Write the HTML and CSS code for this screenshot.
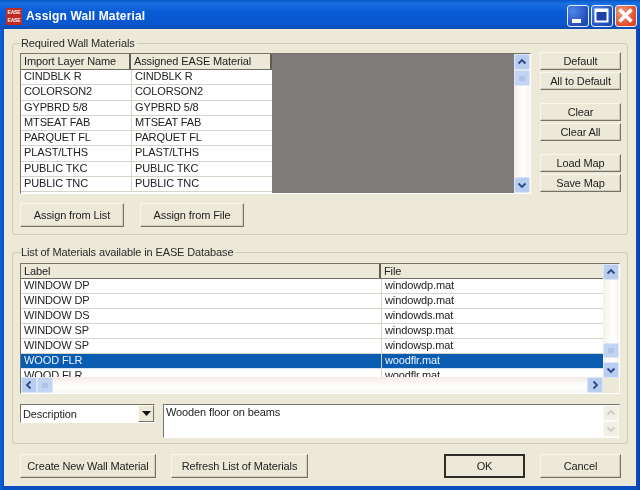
FILE: index.html
```html
<!DOCTYPE html>
<html lang="en">
<head>
<meta charset="utf-8">
<title>Assign Wall Material</title>
<link rel="stylesheet" href="styles.css">
</head>
<body>
<div class="window">
  <header class="titlebar">
    <span class="app-icon"><span>EASE</span><span>EASE</span></span>
    <h1 class="title">Assign Wall Material</h1>
    <div class="caption-buttons">
      <span class="cap cap-min"><svg width="22" height="22" viewBox="0 0 22 22"><rect x="5" y="14" width="9" height="4" fill="#fff"/></svg></span>
      <span class="cap cap-max"><svg width="22" height="22" viewBox="0 0 22 22"><rect x="4.500" y="4.500" width="12" height="12" fill="#1c3fa8" stroke="#fff" stroke-width="2"/><rect x="4" y="4" width="13" height="3" fill="#fff"/></svg></span>
      <span class="cap cap-close"><svg width="22" height="22" viewBox="0 0 22 22"><path d="M4.500 4.500l12 12M16.500 4.500l-12 12" stroke="#fff" stroke-width="3.600" fill="none"/></svg></span>
    </div>
  </header>
  <main class="client">
    <fieldset class="group group-top">
      <legend>Required Wall Materials</legend>
      <div class="top-row">
        <div class="grid-box grid-top">
          <div class="grid-main">
            <div class="table-wrap">
              <div class="thead cols-a"><span class="th">Import Layer Name</span><span class="th">Assigned EASE Material</span></div>
              <div class="row cols-a"><span>CINDBLK R</span><span>CINDBLK R</span></div>
              <div class="row cols-a"><span>COLORSON2</span><span>COLORSON2</span></div>
              <div class="row cols-a"><span>GYPBRD 5/8</span><span>GYPBRD 5/8</span></div>
              <div class="row cols-a"><span>MTSEAT FAB</span><span>MTSEAT FAB</span></div>
              <div class="row cols-a"><span>PARQUET FL</span><span>PARQUET FL</span></div>
              <div class="row cols-a"><span>PLAST/LTHS</span><span>PLAST/LTHS</span></div>
              <div class="row cols-a"><span>PUBLIC TKC</span><span>PUBLIC TKC</span></div>
              <div class="row cols-a"><span>PUBLIC TNC</span><span>PUBLIC TNC</span></div>
            </div>
            <div class="gray-fill"></div>
          </div>
          <div class="vscroll">
            <span class="sbtn"><svg width="16" height="16" viewBox="0 0 16 16"><path d="M4.500 9.500L8 6l3.500 3.500" class="chev"/></svg></span>
            <span class="thumb thumb-top"></span>
            <span class="track"></span>
            <span class="sbtn"><svg width="16" height="16" viewBox="0 0 16 16"><path d="M4.500 6.500L8 10l3.500-3.500" class="chev"/></svg></span>
          </div>
        </div>
        <div class="side-buttons">
          <button class="btn side">Default</button>
          <button class="btn side">All to Default</button>
          <button class="btn side gap-before">Clear</button>
          <button class="btn side">Clear All</button>
          <button class="btn side gap-before">Load Map</button>
          <button class="btn side">Save Map</button>
        </div>
      </div>
      <div class="assign-row">
        <button class="btn assign">Assign from List</button>
        <button class="btn assign">Assign from File</button>
      </div>
    </fieldset>

    <fieldset class="group group-bottom">
      <legend>List of Materials available in EASE Database</legend>
      <div class="grid-box grid-list">
        <div class="list-left">
          <div class="list-view">
            <div class="thead cols-b"><span class="th">Label</span><span class="th th-plain">File</span></div>
            <div class="row cols-b"><span>WINDOW DP</span><span>windowdp.mat</span></div>
            <div class="row cols-b"><span>WINDOW DP</span><span>windowdp.mat</span></div>
            <div class="row cols-b"><span>WINDOW DS</span><span>windowds.mat</span></div>
            <div class="row cols-b"><span>WINDOW SP</span><span>windowsp.mat</span></div>
            <div class="row cols-b"><span>WINDOW SP</span><span>windowsp.mat</span></div>
            <div class="row cols-b selected"><span>WOOD FLR</span><span>woodflr.mat</span></div>
            <div class="row cols-b"><span>WOOD FLR</span><span>woodflr.mat</span></div>
          </div>
          <div class="hscroll">
            <span class="sbtn"><svg width="16" height="16" viewBox="0 0 16 16"><path d="M9.500 4.500L6 8l3.500 3.500" class="chev"/></svg></span>
            <span class="thumb thumb-h"></span>
            <span class="track"></span>
            <span class="sbtn"><svg width="16" height="16" viewBox="0 0 16 16"><path d="M6.500 4.500L10 8l-3.500 3.500" class="chev"/></svg></span>
          </div>
        </div>
        <div class="scroll-col">
          <div class="vscroll vscroll-list">
            <span class="sbtn"><svg width="16" height="16" viewBox="0 0 16 16"><path d="M4.500 9.500L8 6l3.500 3.500" class="chev"/></svg></span>
            <span class="track"></span>
            <span class="thumb thumb-low"></span>
            <span class="sbtn"><svg width="16" height="16" viewBox="0 0 16 16"><path d="M4.500 6.500L8 10l3.500-3.500" class="chev"/></svg></span>
          </div>
          <span class="corner"></span>
        </div>
      </div>
      <div class="desc-row">
        <div class="combo">
          <span class="combo-text">Description</span>
          <span class="combo-arrow"><svg width="9" height="5" viewBox="0 0 9 5"><path d="M0 0h9L4.500 5z" fill="#111"/></svg></span>
        </div>
        <div class="memo">
          <span class="memo-text">Wooden floor on beams</span>
          <div class="memo-scroll">
            <span class="dis-btn"><svg width="16" height="16" viewBox="0 0 16 16"><path d="M4.500 9.500L8 6l3.500 3.500" class="chev-dis"/></svg></span>
            <span class="dis-btn"><svg width="16" height="16" viewBox="0 0 16 16"><path d="M4.500 6.500L8 10l3.500-3.500" class="chev-dis"/></svg></span>
          </div>
        </div>
      </div>
    </fieldset>

    <footer class="footer">
      <button class="btn wide">Create New Wall Material</button>
      <button class="btn wide">Refresh List of Materials</button>
      <span class="spacer"></span>
      <button class="btn action default">OK</button>
      <button class="btn action">Cancel</button>
    </footer>
  </main>
</div>
</body>
</html>
```
FILE: styles.css
```css
* { box-sizing: border-box; }
html, body { margin: 0; padding: 0; }
body { width: 640px; height: 490px; overflow: hidden; background: #0a47b8; font-family: "Liberation Sans", Arial, sans-serif; font-size: 11px; letter-spacing: -0.12px; color: #222; }

.window { width: 640px; height: 490px; display: flex; flex-direction: column; padding: 0 4px 4px 4px; background: linear-gradient(90deg, #0f5fd8 0, #0a4fc0 4px, #0a4fc0 636px, #0a3fa8 100%); filter: blur(0.35px); }

.titlebar { height: 29px; margin: 0 -4px; padding: 3px 3px 0 6px; display: flex; align-items: center; gap: 4px; background: linear-gradient(180deg, #0a55c8 0%, #1a6fe0 12%, #0a5bd6 40%, #0a57cf 80%, #0a4cb4 100%); flex: none; }
.app-icon { width: 16px; height: 17px; background: #c02a20; color: #fff; font-size: 5px; line-height: 8px; display: flex; flex-direction: column; align-items: center; justify-content: center; overflow: hidden; letter-spacing: -0.2px; font-weight: 700; flex: none; }
.title { margin: 0; font-size: 12px; font-weight: 700; color: #fff; letter-spacing: 0.15px; flex: 1; font-family: "Liberation Sans", Arial, sans-serif; }
.caption-buttons { display: flex; gap: 2px; }
.cap { width: 22px; height: 22px; border: 1px solid #e8eefb; border-radius: 3px; display: block; overflow: hidden; background: radial-gradient(circle at 25% 25%, #4f86e8, #1e48b4 80%); }
.cap svg { display: block; margin: -1px; }
.cap-close { background: radial-gradient(circle at 30% 30%, #f09a78, #dd4a22 75%); }

.client { flex: 1; background: #ece9d8; padding: 8px 8px 0 8px; display: flex; flex-direction: column; min-height: 0; }

.group { margin: 0; padding: 3px 6px 0 7px; border: 1px solid #cfccbb; border-radius: 3px; min-width: 0; }
.group legend { padding: 0 2px 0 0; margin-left: 1px; line-height: 13px; color: #2a2a2a; }
.group-top { height: 198px; }
.group-bottom { height: 198px; margin-top: 11px; padding-top: 4px; }

.top-row { display: flex; gap: 9px; }
.grid-box { border: 1px solid; border-color: #77746a #fff #fff #77746a; display: flex; background: #fff; }
.grid-top { width: 511px; height: 141px; }
.grid-main { flex: 1; display: flex; min-width: 0; }
.table-wrap { width: 251px; background: #fff; overflow: hidden; flex: none; }
.gray-fill { flex: 1; background: #7f7b7b; }

.thead { height: 16px; background: #ece9d8; border-bottom: 1px solid #6f6c62; }
.th { padding-left: 3px; line-height: 15px; border-right: 2px solid #5f5c54; color: #222; display: block; white-space: nowrap; }
.th-plain { border-right: 0; }
.row { height: 15.3px; border-bottom: 1px solid #d6d3c8; line-height: 13px; color: #222; }
.row span { padding-left: 3px; display: block; white-space: nowrap; }
.row span + span { border-left: 1px solid #d6d3c8; }
.cols-a { display: grid; grid-template-columns: 110px 141px; }
.cols-b { display: grid; grid-template-columns: 360px 223px; }
.selected { background: #0a5cb0; color: #e8f2ff; border-bottom-color: #d6e2ee; }

.vscroll { width: 16px; flex: none; display: flex; flex-direction: column; background: linear-gradient(90deg, #f3f1e6, #fff 60%, #f6f5ee); }
.hscroll { height: 16px; flex: none; display: flex; background: linear-gradient(180deg, #f5ece6, #fff 60%, #f6f5ee); }
.sbtn { width: 16px; height: 16px; flex: none; background: #b9cdf0; border: 1px solid #dce6f7; border-radius: 2px; display: block; }
.sbtn svg { display: block; margin: -1px; }
.chev { fill: none; stroke: #2b4a86; stroke-width: 1.8; }
.thumb { flex: none; width: 16px; height: 16px; border: 1px solid #dde6f7; border-radius: 2px; display: block; background: linear-gradient(#aec3ea, #aec3ea) center / 6px 5px no-repeat, #c3d3f2; }
.thumb-low { height: 15px; margin-bottom: 4px; }
.track { flex: 1; display: block; }
.scroll-col { width: 16px; flex: none; display: flex; flex-direction: column; background: #ece9d8; }
.vscroll-list { flex: 1; }
.corner { height: 15px; flex: none; display: block; }

.side-buttons { display: flex; flex-direction: column; gap: 2px; margin-top: -1px; }
.gap-before { margin-top: 11px; }

.btn { font: inherit; letter-spacing: inherit; color: #222; background: #ece9d8; border: 1px solid; border-color: #f8f7ef #75726a #75726a #f8f7ef; box-shadow: inset -1px -1px 0 #cfccbb; padding: 0; display: block; white-space: nowrap; }
.side { width: 81px; height: 18px; }
.assign-row { display: flex; gap: 16px; margin-top: 9px; }
.assign { width: 104px; height: 24px; }

.grid-list { height: 131px; width: 600px; }
.list-left { flex: 1; display: flex; flex-direction: column; min-width: 0; }
.list-view { flex: 1; overflow: hidden; background: #fff; min-height: 0; }
.list-view .row { height: 15px; }
.list-view .thead { height: 15px; }
.list-view .th { line-height: 14px; }

.desc-row { display: flex; gap: 8px; margin-top: 10px; }
.combo { width: 135px; height: 19px; display: flex; justify-content: space-between; border: 1px solid; border-color: #77746a #e8e6d8 #fff #77746a; background: #fff; }
.combo-text { padding-left: 2px; line-height: 18px; }
.combo-arrow { width: 16px; height: 17px; background: #ece9d8; border: 1px solid; border-color: #fbfaf3 #75726a #75726a #fbfaf3; display: flex; align-items: center; justify-content: center; }
.memo { width: 457px; height: 34px; border: 1px solid; border-color: #77746a #e8e6d8 #fff #77746a; background: #fff; display: flex; justify-content: space-between; }
.memo-text { padding: 1px 0 0 2px; line-height: 13px; }
.memo-scroll { width: 16px; display: flex; flex-direction: column; background: #f8f7f1; }
.dis-btn { width: 16px; height: 16px; display: block; background: #f1efe6; border: 1px solid #faf9f4; }
.dis-btn svg { display: block; margin: -1px; }
.chev-dis { fill: none; stroke: #cfcdc0; stroke-width: 1.8; }

.footer { display: flex; gap: 15px; margin-top: 10px; height: 24px; padding: 0 7px 0 8px; }
.wide { width: 136px; height: 24px; }
.wide + .wide { width: 137px; }
.spacer { flex: 1; }
.action { width: 81px; height: 24px; }
.default { border: 2px solid #2e2c26; box-shadow: none; }
```
